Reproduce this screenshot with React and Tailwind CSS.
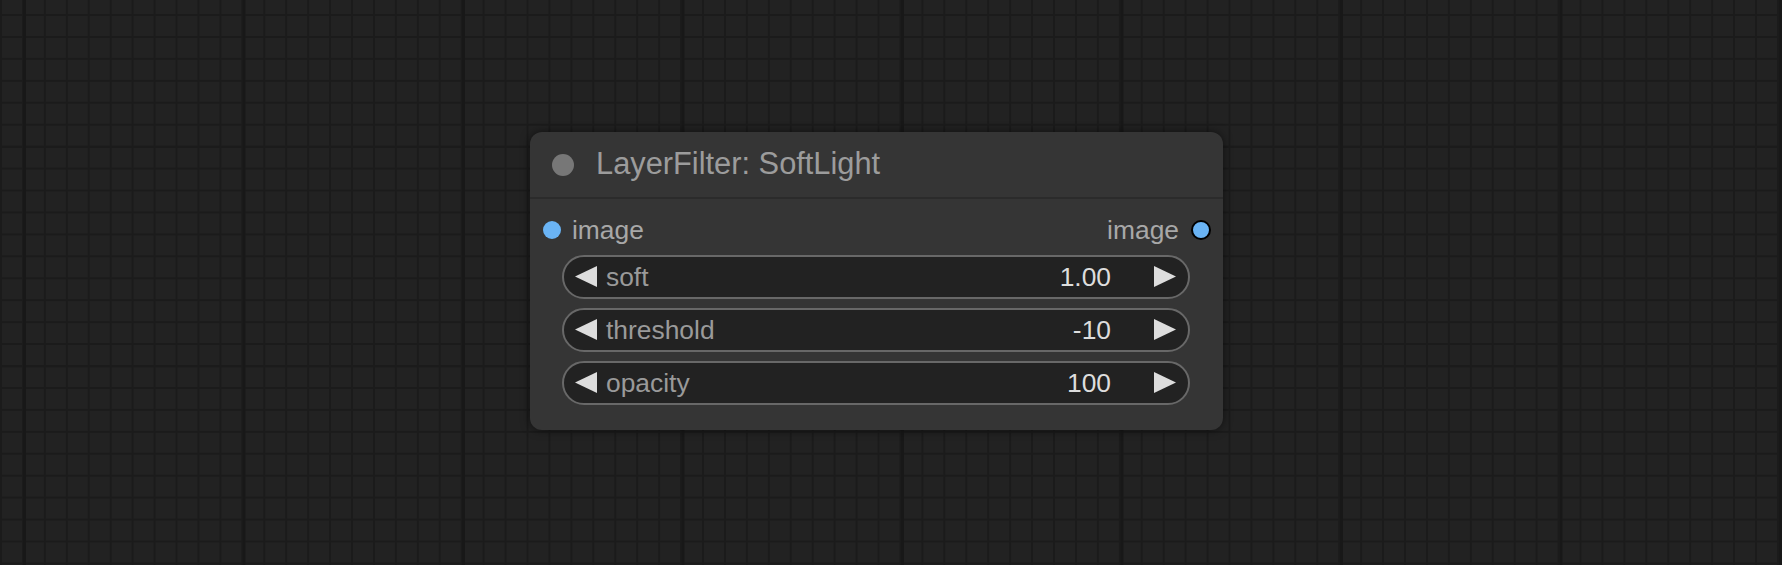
// App.jsx
import React from "react";

const widgets = [
  { label: "soft", value: "1.00" },
  { label: "threshold", value: "-10" },
  { label: "opacity", value: "100" },
];

const Arrow = ({ dir }) => (
  <svg width="22" height="22" viewBox="0 0 22 22" className="shrink-0">
    {dir === "left" ? (
      <polygon points="22,0 22,21 0,10.5" fill="#dddddd" />
    ) : (
      <polygon points="0,0 0,21 22,10.5" fill="#dddddd" />
    )}
  </svg>
);

const Widget = ({ label, value }) => (
  <div className="flex items-center h-[44px] rounded-full border-2 border-[#686868] bg-[#222222] pl-[11px] pr-[12px]">
    <Arrow dir="left" />
    <span className="ml-[9px] text-[#9a9a9a]">{label}</span>
    <span className="ml-auto text-[#dddddd]">{value}</span>
    <span className="ml-[43px]">
      <Arrow dir="right" />
    </span>
  </div>
);

const App = () => {
  return (
    <div
      className="w-[1782px] h-[565px] overflow-hidden bg-[#222222] pl-[530px] pt-[132px] bg-[linear-gradient(to_right,#181818_3px,transparent_3px),linear-gradient(to_bottom,#1b1b1b_2px,transparent_2px),linear-gradient(to_right,#1b1b1b_2px,transparent_2px),linear-gradient(to_bottom,#1b1b1b_2px,transparent_2px)] bg-[size:219.5px_219.5px,219.5px_219.5px,21.95px_21.95px,21.95px_21.95px] bg-[position:23px_0,0_146px,0_0,0_14px]"
      style={{ fontFamily: '"Liberation Sans", Arial, sans-serif' }}
    >
      <div className="w-[693px] h-[298px] rounded-[12px] bg-[#353535] shadow-[0_0_10px_rgba(0,0,0,0.55)] flex flex-col">
        <div className="h-[67px] flex items-center border-b-2 border-[#2b2b2b] pl-[22px]">
          <div className="w-[22px] h-[22px] rounded-full bg-[#777777]" />
          <span className="ml-[22px] text-[30.8px] text-[#9c9c9c] leading-none">LayerFilter: SoftLight</span>
        </div>
        <div className="flex items-center h-[44px] mt-[9px] pl-[13px] pr-[12px] text-[26.4px] leading-none">
          <div className="w-[18px] h-[18px] rounded-full bg-[#6ab4f5]" />
          <span className="ml-[11px] text-[#a8a8a8]">image</span>
          <span className="ml-auto text-[#a8a8a8]">image</span>
          <div className="ml-[12px] w-[20px] h-[20px] rounded-full bg-[#6ab4f5] border-2 border-black" />
        </div>
        <div className="flex flex-col gap-[9px] mt-[3px] pl-[32px] pr-[33px] text-[26.4px] leading-none">
          {widgets.map((w) => (
            <Widget key={w.label} label={w.label} value={w.value} />
          ))}
        </div>
      </div>
    </div>
  );
};

export default App;
